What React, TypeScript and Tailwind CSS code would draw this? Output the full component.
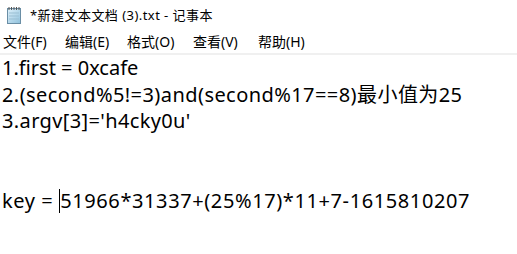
import React from "react";

const font = { fontFamily: '"Noto Sans", "Noto Sans CJK SC", sans-serif' };

function NoteIcon() {
  return (
    <svg width="18" height="18" viewBox="0 0 18 18">
      <defs>
        <linearGradient id="g" x1="0" y1="0" x2="1" y2="1">
          <stop offset="0" stopColor="#dff1fb" />
          <stop offset="1" stopColor="#8fc1dc" />
        </linearGradient>
      </defs>
      <rect x="2.5" y="2.5" width="13" height="15" fill="url(#g)" stroke="#6a8ea5" />
      <line x1="4" y1="7" x2="14" y2="7" stroke="#9bbfd3" />
      <line x1="4" y1="10" x2="14" y2="10" stroke="#9bbfd3" />
      <line x1="4" y1="13" x2="14" y2="13" stroke="#9bbfd3" />
      <path d="M4 1v3M6.5 1v3M9 1v3M11.5 1v3M14 1v3" stroke="#555" strokeWidth="1" />
    </svg>
  );
}

export default function App() {
  const menus: [string, string][] = [
    ["文件(F)", "w-[62px]"],
    ["编辑(E)", "w-[62px]"],
    ["格式(O)", "w-[66px]"],
    ["查看(V)", "w-[65px]"],
    ["帮助(H)", "w-[60px]"],
  ];
  return (
    <div className="w-[517px] h-[254px] bg-white overflow-hidden text-black" style={font}>
      <div className="h-[30px] flex items-center pl-[5px]">
        <NoteIcon />
        <span className="ml-[7px] text-[13px] tracking-[0.45px] leading-none">*新建文本文档 (3).txt - 记事本</span>
      </div>
      <div className="h-[23px] flex items-center pl-[3px] text-[14px] leading-none">
        {menus.map(([m, w]) => (
          <span key={m} className={w}>{m}</span>
        ))}
      </div>
      <div className="h-[2px] bg-[#f0f0f0]" />
      <div className="pl-[2px] text-[20px] leading-[26.5px] whitespace-pre">
        <div>1.first = 0xcafe</div>
        <div className="tracking-[0.43px]">2.(second%5!=3)and(second%17==8)最小值为25</div>
        <div className="tracking-[0.37px]">3.argv[3]='h4cky0u'</div>
        <div>&nbsp;</div>
        <div>&nbsp;</div>
        <div className="flex items-center tracking-[0.6px]">
          <span>key = </span>
          <span className="inline-block w-[1px] h-[24px] bg-black" />
          <span>51966*31337+(25%17)*11+7-1615810207</span>
        </div>
      </div>
    </div>
  );
}
